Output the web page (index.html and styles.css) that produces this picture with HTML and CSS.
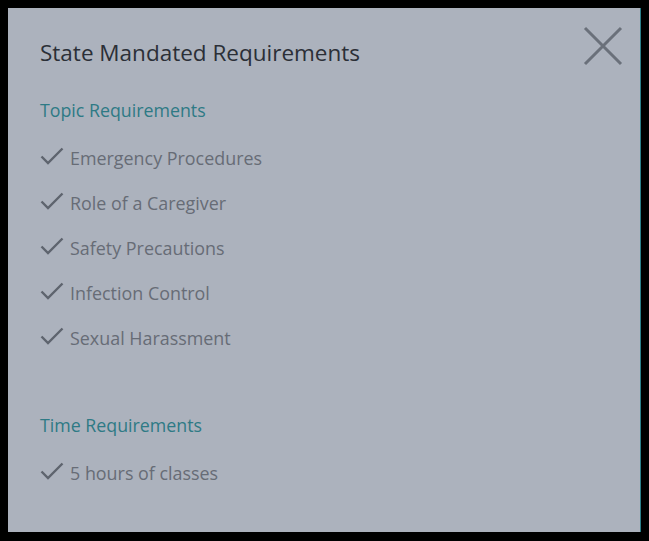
FILE: index.html
```html
<!DOCTYPE html>
<html>
<head>
<meta charset="utf-8">
<link rel="stylesheet" href="styles.css">
</head>
<body>
<div class="panel">
  <button class="close" aria-label="Close">
    <svg width="40" height="40" viewBox="0 0 40 40"><path d="M2 2 L38 38 M38 2 L2 38" stroke="#6a707a" stroke-width="3" fill="none"/></svg>
  </button>
  <h1 class="title">State Mandated Requirements</h1>
  <h2 class="section">Topic Requirements</h2>
  <ul class="list">
    <li class="item"><svg class="check" width="24" height="18" viewBox="0 0 24 18"><path d="M1.5 9.5 L8 16 L22.5 1.5" stroke="#5e646e" stroke-width="2.4" fill="none"/></svg>Emergency Procedures</li>
    <li class="item"><svg class="check" width="24" height="18" viewBox="0 0 24 18"><path d="M1.5 9.5 L8 16 L22.5 1.5" stroke="#5e646e" stroke-width="2.4" fill="none"/></svg>Role of a Caregiver</li>
    <li class="item"><svg class="check" width="24" height="18" viewBox="0 0 24 18"><path d="M1.5 9.5 L8 16 L22.5 1.5" stroke="#5e646e" stroke-width="2.4" fill="none"/></svg>Safety Precautions</li>
    <li class="item"><svg class="check" width="24" height="18" viewBox="0 0 24 18"><path d="M1.5 9.5 L8 16 L22.5 1.5" stroke="#5e646e" stroke-width="2.4" fill="none"/></svg>Infection Control</li>
    <li class="item"><svg class="check" width="24" height="18" viewBox="0 0 24 18"><path d="M1.5 9.5 L8 16 L22.5 1.5" stroke="#5e646e" stroke-width="2.4" fill="none"/></svg>Sexual Harassment</li>
  </ul>
  <h2 class="section section-time">Time Requirements</h2>
  <ul class="list">
    <li class="item"><svg class="check" width="24" height="18" viewBox="0 0 24 18"><path d="M1.5 9.5 L8 16 L22.5 1.5" stroke="#5e646e" stroke-width="2.4" fill="none"/></svg>5 hours of classes</li>
  </ul>
</div>
</body>
</html>
```
FILE: styles.css
```css
html, body {
  margin: 0;
  padding: 0;
  background: #000;
}
body {
  padding: 8px 8px 9px 8px;
  width: 649px;
  height: 541px;
  box-sizing: border-box;
  font-family: "Open Sans", "Noto Sans", sans-serif;
}
.panel {
  position: relative;
  background: #acb2bd;
  border-right: 1px solid #2b7f8a;
  width: 633px;
  height: 524px;
  box-sizing: border-box;
  padding: 29px 32px 0 32px;
}
.close {
  position: absolute;
  top: 18px;
  right: 17px;
  width: 40px;
  height: 40px;
  padding: 0;
  border: 0;
  background: none;
}
.close svg { display: block; }
.title {
  margin: 0;
  font-size: 22.5px;
  font-weight: 400;
  color: #2b2f37;
  line-height: 32px;
}
.section {
  margin: 29px 0 0 0;
  font-size: 17.8px;
  font-weight: 400;
  color: #2e7a85;
  line-height: 24px;
}
.section-time {
  margin-top: 63px;
}
.list {
  list-style: none;
  margin: 24px 0 0 0;
  padding: 0;
  display: flex;
  flex-direction: column;
  gap: 21px;
}
.item {
  display: flex;
  align-items: center;
  gap: 6px;
  font-size: 17.9px;
  color: #676c76;
  line-height: 24px;
}
.check { display: block; flex: none; margin-top: -4px; }
```
